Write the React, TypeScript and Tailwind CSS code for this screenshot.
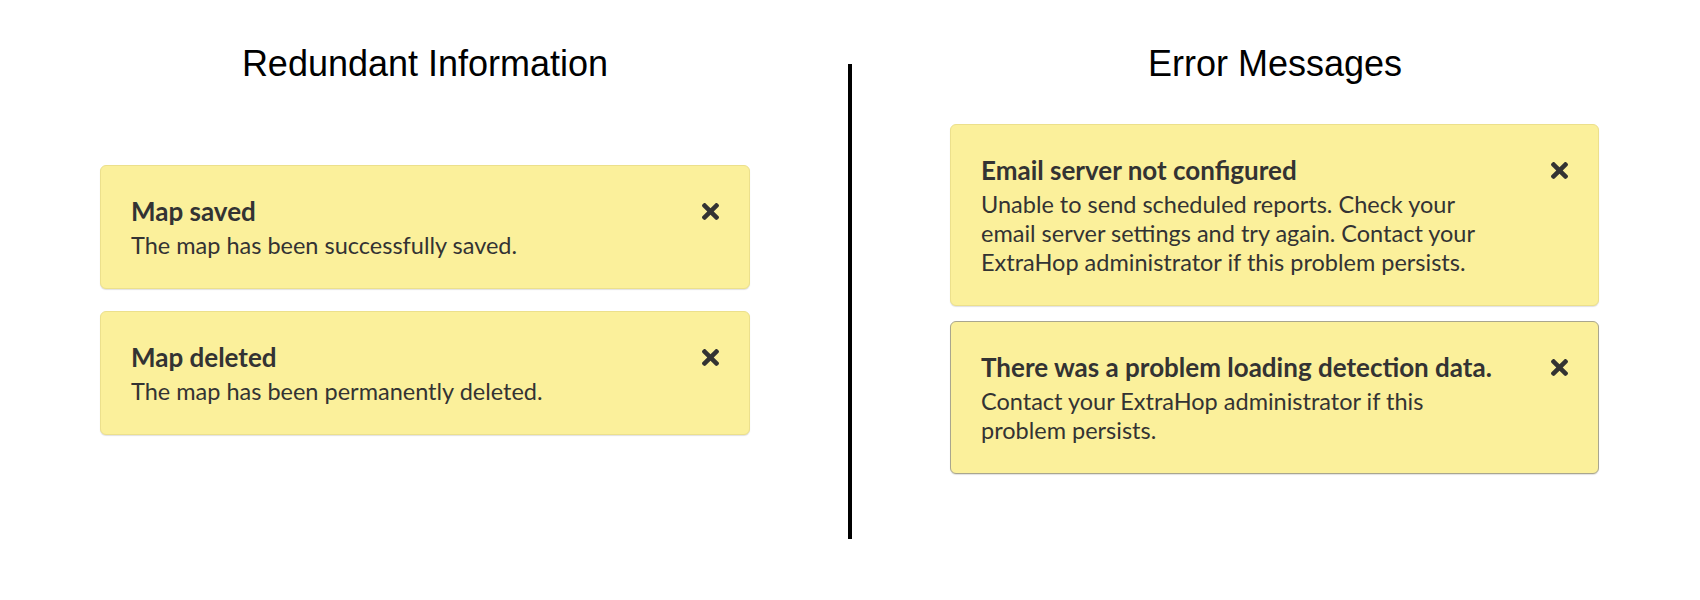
import type { ReactNode } from 'react';

type Notice = { title: string; body: string; edge?: string };

const redundant: Notice[] = [
  { title: 'Map saved', body: 'The map has been successfully saved.' },
  { title: 'Map deleted', body: 'The map has been permanently deleted.' },
];

const errors: Notice[] = [
  {
    title: 'Email server not configured',
    body: 'Unable to send scheduled reports. Check your email server settings and try again. Contact your ExtraHop administrator if this problem persists.',
  },
  {
    title: 'There was a problem loading detection data.',
    body: 'Contact your ExtraHop administrator if this problem persists.',
    edge: 'border-[#a9a68e]',
  },
];

export default function App() {
  return (
    <div className="flex h-[600px] w-[1700px] bg-white font-['Liberation_Sans',Arial,sans-serif] text-black">
      <Column title="Redundant Information" className="pl-[100px] pt-[44px]" listClass="mt-[81px] gap-[22px]">
        {redundant.map((n) => (
          <Toast key={n.title} notice={n} width="w-[650px]" />
        ))}
      </Column>

      {/* divider between the two examples */}
      <div className="mt-[64px] h-[475px] w-[4px] shrink-0 bg-black" />

      <Column title="Error Messages" className="pl-[98px] pt-[44px]" listClass="mt-[40px] gap-[15px]">
        {errors.map((n) => (
          <Toast key={n.title} notice={n} width="w-[649px]" />
        ))}
      </Column>
    </div>
  );
}

function Column({
  title,
  className,
  listClass,
  children,
}: {
  title: string;
  className: string;
  listClass: string;
  children: ReactNode;
}) {
  return (
    <section className={`w-[848px] shrink-0 ${className}`}>
      <h2 className="w-[650px] text-center text-[36px] leading-[40px] font-normal">{title}</h2>
      <div className={`flex flex-col ${listClass}`}>{children}</div>
    </section>
  );
}

function Toast({ notice, width }: { notice: Notice; width: string }) {
  return (
    <div
      className={`flex items-start justify-between rounded-[6px] border bg-[#fbf09b] pt-[31px] pr-[30px] pb-[28px] pl-[30px] font-['Lato',sans-serif] text-[#333333] shadow-[0_1px_1px_rgba(0,0,0,0.12)] ${notice.edge ?? 'border-[#ece08c]'} ${width}`}
    >
      <div className="w-[515px]">
        <p className="text-[26px] leading-[29px] font-bold whitespace-nowrap">{notice.title}</p>
        <p className="mt-[5px] text-[23.5px] leading-[29px]">{notice.body}</p>
      </div>
      <CloseGlyph />
    </div>
  );
}

/** heavy rounded × like the original dismiss button */
function CloseGlyph() {
  return (
    <svg width={17} height={17} viewBox="0 80 352 352" className="mt-[6px] shrink-0 text-[#333333]" aria-hidden>
      <path
        fill="currentColor"
        d="M242.72 256l100.07-100.07c12.28-12.28 12.28-32.19 0-44.48l-22.24-22.24c-12.28-12.28-32.19-12.28-44.48 0L176 189.28 75.93 89.21c-12.28-12.28-32.19-12.28-44.48 0L9.21 111.45c-12.28 12.28-12.28 32.19 0 44.48L109.28 256 9.21 356.07c-12.28 12.28-12.28 32.19 0 44.48l22.24 22.24c12.28 12.28 32.2 12.28 44.48 0L176 322.72l100.07 100.07c12.28 12.28 32.2 12.28 44.48 0l22.24-22.24c12.28-12.28 12.28-32.19 0-44.48L242.72 256z"
      />
    </svg>
  );
}
